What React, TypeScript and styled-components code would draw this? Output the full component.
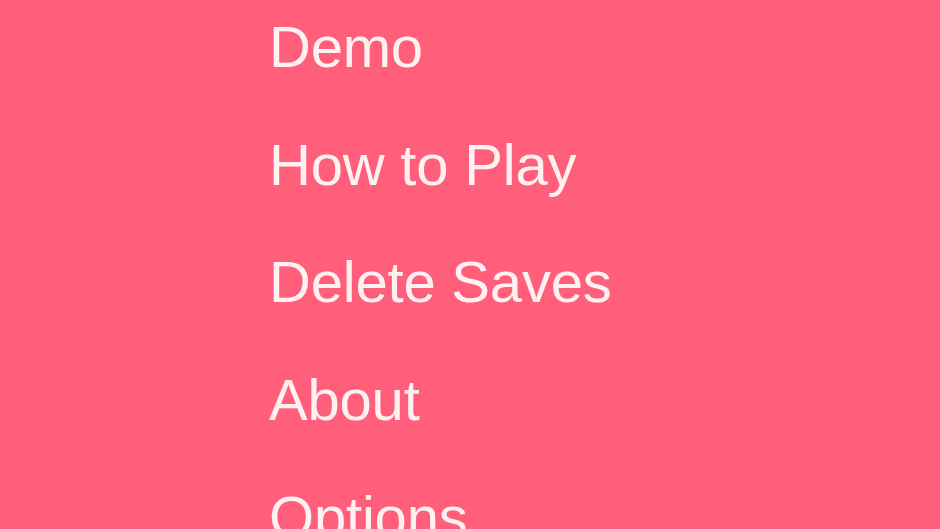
import React from "react";
import styled, { createGlobalStyle } from "styled-components";

const Global = createGlobalStyle`
  html, body {
    margin: 0;
    padding: 0;
    background: #ff5f7a;
    overflow: hidden;
  }
`;

const Screen = styled.main`
  width: 940px;
  height: 529px;
  background: #ff5f7a;
  overflow: hidden;
  box-sizing: border-box;
  padding-left: 269px;
`;

const Menu = styled.ul`
  list-style: none;
  margin: -12px 0 0 0;
  padding: 0;
  display: flex;
  flex-direction: column;
`;

const Item = styled.li`
  font-family: "Liberation Sans", Arial, sans-serif;
  font-size: 58px;
  line-height: 117.5px;
  height: 117.5px;
  color: #fff1f2;
  letter-spacing: -0.2px;
  white-space: nowrap;
  cursor: pointer;
`;

const items = ["Demo", "How to Play", "Delete Saves", "About", "Options"];

export default function App() {
  return (
    <>
      <Global />
      <Screen>
        <Menu>
          {items.map((t) => (
            <Item key={t}>{t}</Item>
          ))}
        </Menu>
      </Screen>
    </>
  );
}
